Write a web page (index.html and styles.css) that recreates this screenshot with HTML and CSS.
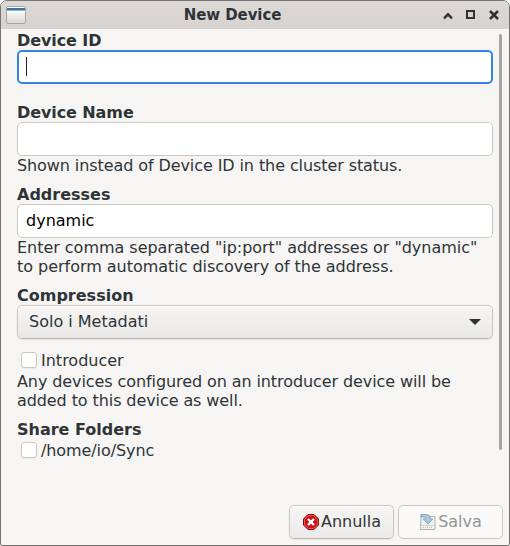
FILE: index.html
```html
<!DOCTYPE html>
<html lang="it">
<head>
<meta charset="utf-8">
<title>New Device</title>
<link rel="stylesheet" href="styles.css">
</head>
<body>
<div class="window">
  <header class="titlebar">
    <span class="app-icon"></span>
    <h1 class="title">New Device</h1>
    <div class="controls">
      <svg width="12" height="12" viewBox="0 0 12 12"><path d="M2 9.300 6 5.300l4 4" fill="none" stroke="#2e3436" stroke-width="2.500"/></svg>
      <svg width="12" height="12" viewBox="0 0 12 12"><path d="M2 2h7v7H2z" fill="none" stroke="#2e3436" stroke-width="2"/></svg>
      <svg width="12" height="12" viewBox="0 0 12 12"><path d="m2 2 8 8M10 2l-8 8" fill="none" stroke="#2e3436" stroke-width="2.500"/></svg>
    </div>
  </header>
  <div class="viewport">
    <main class="form">
      <section class="field field-id">
        <h2 class="snug">Device ID</h2>
        <div class="entry focused"><span class="caret"></span></div>
      </section>
      <section class="field">
        <h2 class="snug">Device Name</h2>
        <div class="entry"></div>
        <p class="snug">Shown instead of Device ID in the cluster status.</p>
      </section>
      <section class="field">
        <h2>Addresses</h2>
        <div class="entry">dynamic</div>
        <p class="slightly-snug">Enter comma separated "ip:port" addresses or "dynamic"<br>to perform automatic discovery of the address.</p>
      </section>
      <section class="field field-compression">
        <h2>Compression</h2>
        <div class="combo"><span>Solo i Metadati</span><svg width="12" height="6" viewBox="0 0 12 6"><path d="M0 0h12L6 6z" fill="#2e3436"/></svg></div>
      </section>
      <section class="field">
        <div class="check"><span class="box"></span><span>Introducer</span></div>
        <p class="snug">Any devices configured on an introducer device will be<br>added to this device as well.</p>
      </section>
      <section class="field">
        <h2 class="folders">Share Folders</h2>
        <div class="check"><span class="box"></span><span class="snug">/home/io/Sync</span></div>
      </section>
    </main>
    <div class="scrollbar"></div>
  </div>
  <footer class="actions">
    <div class="button">
      <svg width="16" height="16" viewBox="0 0 16 16"><path d="M5 .5h6L15.500 5v6L11 15.500H5L.5 11V5z" fill="#cc1418" stroke="#8e0608"/><path d="M5.300 1.500h5.400l3.800 3.800v5.400l-3.800 3.800H5.300l-3.800-3.800V5.300z" fill="none" stroke="#ec6b6b" stroke-width=".8"/><path d="m5 5 6 6M11 5l-6 6" stroke="#fff" stroke-width="2.400"/></svg>
      <span>Annulla</span>
    </div>
    <div class="button disabled">
      <svg width="16" height="16" viewBox="0 0 16 16"><path d="M1 2.500h14v13H.5z" fill="#f1f1ef" stroke="#adb0ae"/><path d="M1 11.500h14" stroke="#d2d3d1"/><path d="M3 13.500h10" stroke="#c0c2c0" stroke-dasharray="1 1"/><path d="M.8.6H6q4.300 0 4.300 4.400h2.500L8 10 3.300 5h2.500Q5.500 2.800.8 2.600z" fill="#a9c8e2" stroke="#7499b9" stroke-width=".8"/></svg>
      <span>Salva</span>
    </div>
  </footer>
</div>
</body>
</html>
```

FILE: styles.css
```css
* { box-sizing: border-box; }
body {
  margin: 0;
  background: #fff;
  color: #2e3436;
  font: 16px/19px "DejaVu Sans", sans-serif;
}
.window {
  display: flex;
  flex-direction: column;
  width: 510px;
  height: 546px;
  border: 1px solid #777373;
  border-radius: 7px 7px 2px 2px;
  background: #f6f5f4;
  overflow: hidden;
}
.titlebar {
  display: grid;
  grid-template-columns: 72px 1fr 72px;
  align-items: center;
  height: 28px;
  padding: 0 9px 0 5px;
  background: linear-gradient(#dcd8d5, #d7d3d0);
}
.app-icon {
  width: 20px;
  height: 18px;
  border: 1px solid #a5a7a2;
  border-radius: 2px;
  background: linear-gradient(#fff 0 1px, #4570a8 1px 3px, #9db4d1 3px 4px, #fbfbfa 4px, #d9dbd6);
}
.title {
  margin: 0;
  padding-right: 41px;
  font-size: 15px;
  line-height: 18px;
  letter-spacing: -.08px;
  text-align: center;
}
.controls {
  display: flex;
  justify-content: flex-end;
  gap: 11px;
}
.controls svg { flex: none; }
.viewport {
  display: flex;
  height: 420px;
}
.form {
  width: 492px;
  padding: 2px 0 0 16px;
}
.field {
  width: 476px;
  margin-bottom: 10px;
}
.field-id { margin-bottom: 19px; }
.field-compression { margin-bottom: 12px; }
h2 {
  margin: 0;
  font-size: 16px;
  line-height: 19px;
}
p {
  margin: 0;
  white-space: nowrap;
}
.snug { letter-spacing: -.09px; }
.slightly-snug { letter-spacing: -.03px; }
.entry, .combo {
  display: flex;
  align-items: center;
  height: 34px;
  border: 1px solid #cdc7c2;
  border-radius: 5px;
}
.entry {
  padding: 0 8px 1px;
  background: #fff;
  color: #000;
}
.focused {
  border: 2px solid #3584e4;
  padding: 0 7px 1px;
}
.caret {
  width: 1px;
  height: 19px;
  background: #222;
}
.combo {
  justify-content: space-between;
  padding: 0 11px 1px;
  border-bottom-color: #bfb8b1;
  background: linear-gradient(#f6f5f4, #e9e8e6);
  box-shadow: inset 0 1px #fff, 0 1px 2px rgba(0, 0, 0, .07);
}
.check {
  display: flex;
  align-items: center;
  gap: 4px;
  height: 21px;
  padding: 0 0 2px 4px;
}
.folders { margin-bottom: 2px; }
.box {
  width: 16px;
  height: 16px;
  margin-bottom: 2px;
  border: 1px solid #cdc7c2;
  border-radius: 3px;
  background: #fff;
  box-shadow: 0 1px 1px rgba(0, 0, 0, .05);
}
.scrollbar {
  width: 3px;
  height: 416px;
  margin: 5px 0 0 6px;
  border-radius: 2px;
  background: #a4a6a4;
}
.actions {
  display: flex;
  justify-content: flex-end;
  gap: 4px;
  margin-top: auto;
  padding: 0 6px 6px 0;
}
.button {
  display: flex;
  align-items: center;
  justify-content: center;
  gap: 2px;
  width: 105px;
  height: 34px;
  padding: 0 0 1px 1px;
  border: 1px solid #cdc7c2;
  border-bottom-color: #bfb8b1;
  border-radius: 5px;
  background: linear-gradient(#f6f5f4, #edebe9);
  box-shadow: inset 0 1px #fff, 0 1px 2px rgba(0, 0, 0, .07);
}
.disabled {
  border-color: #cdc7c2;
  background: #faf9f8;
  color: #929595;
  box-shadow: none;
}
```
